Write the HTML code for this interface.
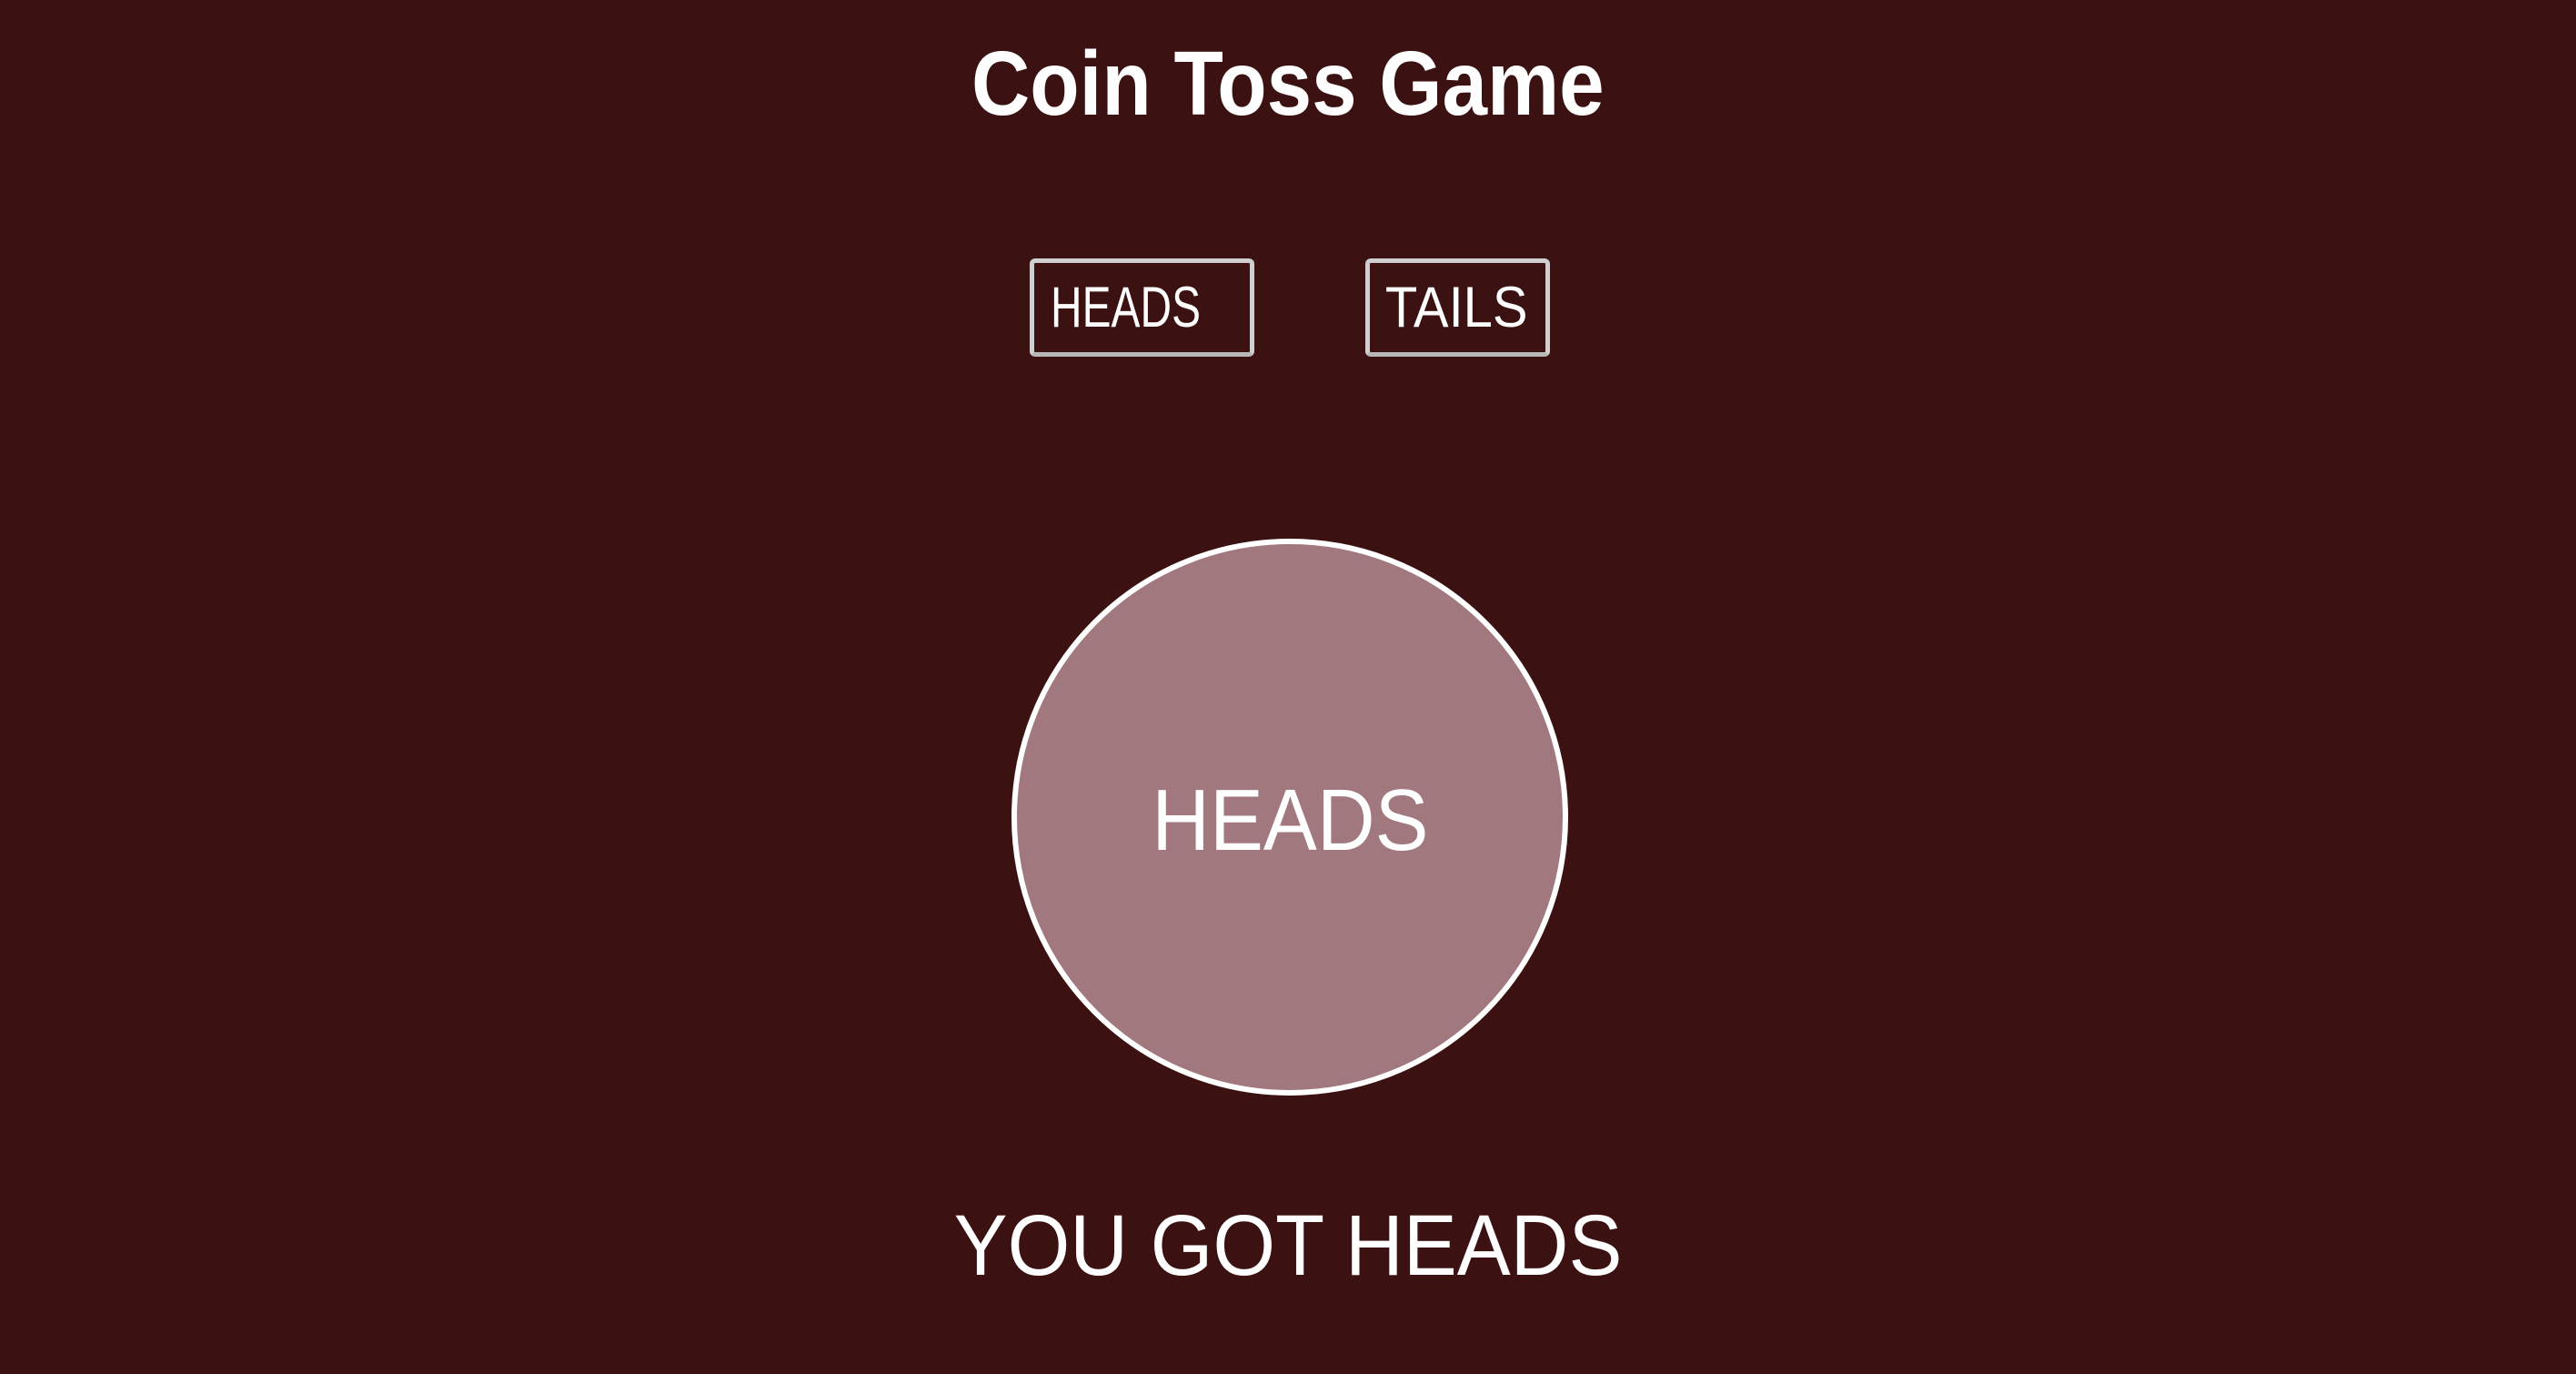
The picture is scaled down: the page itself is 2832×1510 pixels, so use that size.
<!DOCTYPE html>
<html><head><meta charset="utf-8"><style>
html,body{margin:0;padding:0;}
body{width:2832px;height:1510px;background:#3c1112;position:relative;overflow:hidden;font-family:"Liberation Sans",sans-serif;color:#fff;}
.t{position:absolute;left:0;width:2832px;text-align:center;line-height:1;white-space:nowrap;}
.t span{display:inline-block;}
.btn{position:absolute;top:284px;height:108px;border:5px solid #cfcfcf;border-bottom-color:#b8b8b8;border-radius:6px;box-sizing:border-box;}
.coin{position:absolute;left:1112px;top:592px;width:612px;height:612px;border-radius:50%;background:#a1787d;border:6px solid #fff;box-sizing:border-box;}
</style></head><body>
<div class="t" style="top:42px;font-size:100px;font-weight:bold;"><span style="transform:scaleX(0.89)">Coin Toss Game</span></div>
<div class="btn" style="left:1132px;width:247px;"></div>
<div class="btn" style="left:1501px;width:203px;"></div>
<div class="t" style="top:307px;font-size:63px;left:1114px;width:247px;"><span style="transform:scaleX(0.76)">HEADS</span></div>
<div class="t" style="top:307px;font-size:63px;left:1500px;width:203px;"><span style="transform:scaleX(0.92)">TAILS</span></div>
<div class="coin"></div>
<div class="t" style="top:854px;font-size:96px;left:2px;"><span style="transform:scaleX(0.92)">HEADS</span></div>
<div class="t" style="top:1322px;font-size:95px;"><span style="transform:scaleX(0.93)">YOU GOT HEADS</span></div>
</body></html>
